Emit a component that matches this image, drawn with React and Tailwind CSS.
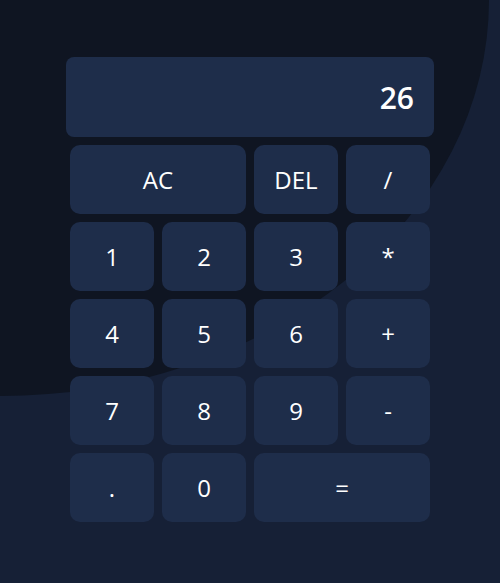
import { useState } from "react";

const keys = [
  { label: "AC", span: true },
  { label: "DEL" },
  { label: "/" },
  { label: "1" },
  { label: "2" },
  { label: "3" },
  { label: "*" },
  { label: "4" },
  { label: "5" },
  { label: "6" },
  { label: "+" },
  { label: "7" },
  { label: "8" },
  { label: "9" },
  { label: "-" },
  { label: "." },
  { label: "0" },
  { label: "=", span: true },
];

export default function App() {
  const [value, setValue] = useState("26");

  const press = (k) => {
    if (k === "AC") return setValue("");
    if (k === "DEL") return setValue((v) => v.slice(0, -1));
    if (k === "=") {
      try {
        // eslint-disable-next-line no-new-func
        setValue(String(Function(`return (${value})`)()));
      } catch (err) {
        setValue("Error");
      }
      return;
    }
    setValue((v) => v + k);
  };

  return (
    <div className="relative min-h-screen overflow-hidden bg-[#162036] flex items-center justify-center" style={{ fontFamily: '"Open Sans", "Noto Sans", sans-serif' }}>
      <div className="absolute -left-[489px] -top-[396px] w-[978px] h-[792px] rounded-[50%] bg-[#0f1522]" />
      <div className="relative w-[368px]">
        <div className="h-20 rounded-lg bg-[#1e2d4a] flex items-center justify-end px-5 text-white text-[30px] font-semibold">
          {value}
        </div>
        <div className="grid grid-cols-4 gap-2 p-1 pt-2">
          {keys.map((k) => (
            <button
              key={k.label}
              onClick={() => press(k.label)}
              className={`h-[69px] rounded-[10px] bg-[#1e2d4a] text-white text-2xl hover:bg-[#25365a] ${k.span ? "col-span-2" : ""}`}
            >
              {k.label}
            </button>
          ))}
        </div>
      </div>
    </div>
  );
}
